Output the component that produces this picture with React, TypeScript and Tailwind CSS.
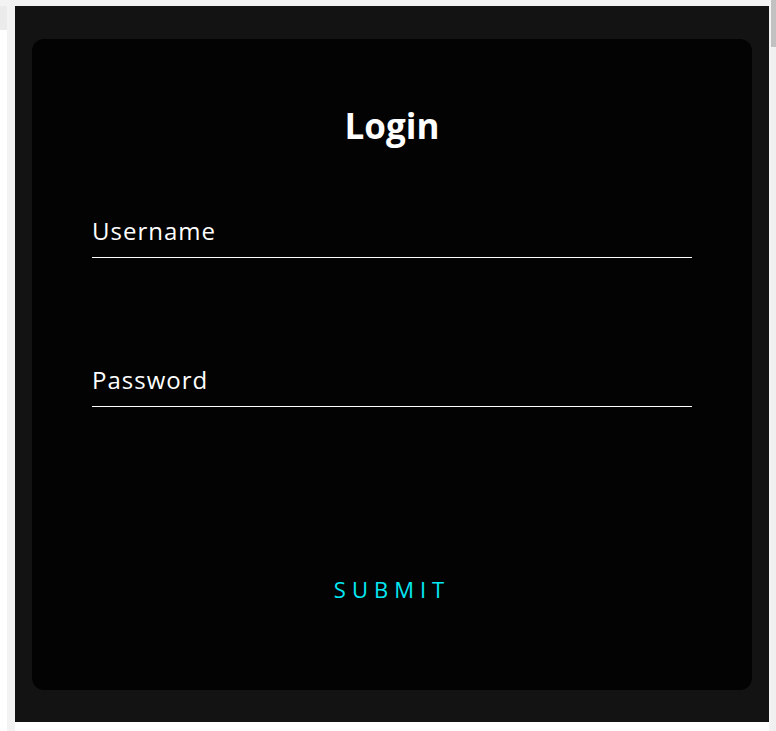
export default function App() {
  return (
    <div className="relative h-[731px] w-[776px] overflow-hidden bg-white" style={{ fontFamily: '"Open Sans", sans-serif' }}>
      <div className="h-[6px] w-full bg-[#f3f3f3]" />
      <div className="flex h-[725px]">
        <div className="w-[7px]">
          <div className="h-[24px] bg-[#ebebeb]" />
        </div>
        <div className="w-[8px] bg-[#f3f3f3]" />
        <div className="flex h-[716px] w-[754px] flex-col bg-[#131313] px-[17px] pt-[33px] pb-[32px]">
          <div className="flex flex-1 flex-col rounded-xl bg-[#030303] px-[60px] pt-[67px]">
            <h2 className="text-center text-[35px] font-bold leading-[40px] text-white">Login</h2>

            <div className="mt-[69px] border-b border-white pb-[10px]">
              <label className="block text-[24px] leading-[32px] tracking-[1px] text-white">Username</label>
            </div>

            <div className="mt-[106px] border-b border-white pb-[10px]">
              <label className="block text-[24px] leading-[32px] tracking-[1px] text-white">Password</label>
            </div>

            <button className="mx-auto mt-[168px] text-[22px] uppercase leading-[28px] tracking-[6px] text-[#03e9f4]">
              Submit
            </button>
          </div>
        </div>
        <div className="w-[2px] bg-[#f3f3f3]" />
        <div className="w-[5px] bg-[#f0f0f0]" />
      </div>
      <div className="absolute right-0 top-0 h-[47px] w-[5px] bg-[#c1c1c1]" />
    </div>
  );
}
